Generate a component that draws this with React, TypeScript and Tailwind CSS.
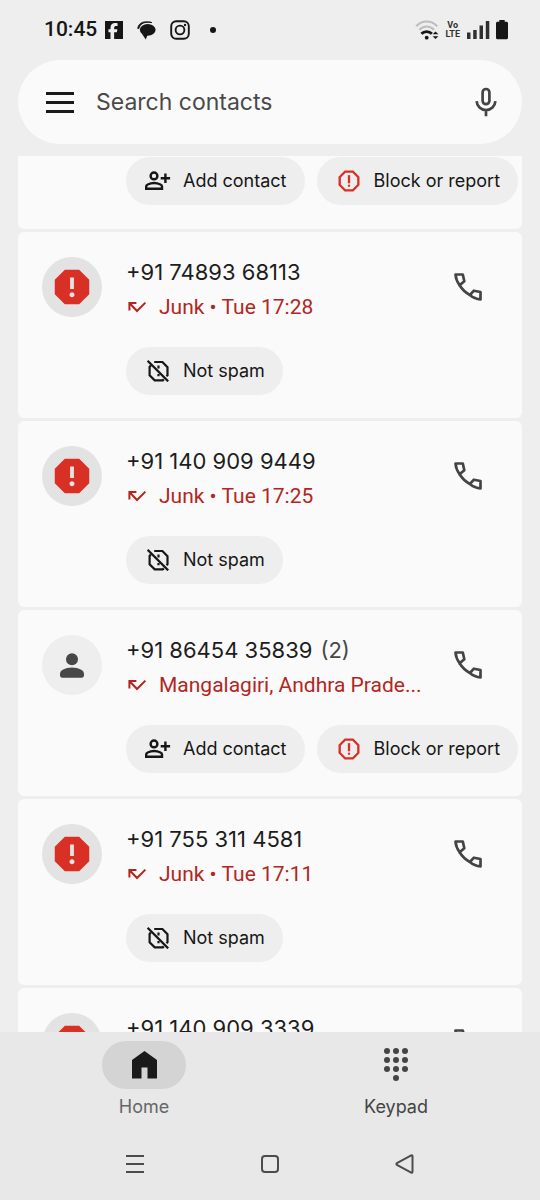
import React from "react";
import { FaFacebookF } from "react-icons/fa6";
import { MdOutlineReport, MdReport } from "react-icons/md";

type Call = {
  id: number;
  number?: string;
  count?: number;
  detail?: string;
  spam: boolean;
};

const calls: Call[] = [
  { id: 1, spam: false },
  { id: 2, number: "+91 74893 68113", detail: "Junk • Tue 17:28", spam: true },
  { id: 3, number: "+91 140 909 9449", detail: "Junk • Tue 17:25", spam: true },
  {
    id: 4,
    number: "+91 86454 35839",
    count: 2,
    detail: "Mangalagiri, Andhra Prade...",
    spam: false,
  },
  { id: 5, number: "+91 755 311 4581", detail: "Junk • Tue 17:11", spam: true },
  { id: 6, number: "+91 140 909 3339", spam: true },
];

/* ---------- icons ---------- */

const PersonAddIcon = () => (
  <svg width="26" height="20" viewBox="0 0 26 20" fill="none" stroke="currentColor" strokeWidth="2.4">
    <circle cx="9" cy="4.9" r="3.4" />
    <path d="M1.2 17.8v-2.2c0-1 .6-1.7 1.5-2.1 4.2-2 8.6-2 12.8 0 .9.4 1.500 1.100 1.500 2.100v2.200z" />
    <path d="M20.400 2.600v9.400M15.700 7.300h9.400" />
  </svg>
);

const NotSpamIcon = () => (
  <svg width="22" height="22" viewBox="0 0 22 22" fill="none" stroke="currentColor" strokeWidth="2.200">
    <path d="M7.200 2h8.200l5.100 5.100v8.200l-1 1M3.800 5.600 2.600 6.900v8.400l5.100 5.100h8.100l1-1" />
    <path d="M.6.8l20.600 20.600" />
    <path d="M11.500 5.500v3M11.500 14v2.300" />
  </svg>
);

const CallIcon = () => (
  <svg width="28" height="28" viewBox="0 0 28 28" fill="none" stroke="currentColor" strokeWidth="2.700" strokeLinejoin="round">
    <path d="M1.500 1.500h7.300l1.500 6.800-4.700 4C3.200 9 1.800 5.600 1.500 1.500z" />
    <path d="M5.600 12.300c2.600 4.200 6 7.400 10.300 9.700l4-4.300 6.600 1.300v7.400c-3.900-.3-7.500-1.800-10.600-4.400" />
  </svg>
);

const MicIcon = () => (
  <svg width="22" height="30" viewBox="0 0 22 30" fill="none" stroke="currentColor" strokeWidth="2.700">
    <rect x="7.600" y="2" width="6.800" height="15.200" rx="3.400" />
    <path d="M1.600 14.200c.4 5.100 4.200 8.900 9.400 8.900s9-3.800 9.400-8.900M11 23v6.200" />
  </svg>
);

const MissedIcon = () => (
  <svg width="21" height="13" viewBox="-1 0 21 13" fill="none" stroke="currentColor" strokeWidth="2">
    <path d="M2.400 9.500V2h7M2.400 2l7.600 8 8.400-8.400" />
  </svg>
);

const PersonIcon = () => (
  <svg width="24" height="25" viewBox="0 0 24 25" fill="currentColor">
    <circle cx="12" cy="6.200" r="6" />
    <path d="M0 21.200c0-2 1-3.600 2.800-4.500 5.800-3 12.600-3 18.400 0 1.800.9 2.800 2.500 2.800 4.500v1.300c0 1.200-1 2.200-2.200 2.200H2.200C1 24.700 0 23.700 0 22.500z" />
  </svg>
);

const MessagesIcon = () => (
  <svg width="19" height="20" viewBox="0 0 19 20" fill="#161616">
    <ellipse cx="10.700" cy="9.800" rx="7.900" ry="5.900" />
    <path d="M5 14l3.800 5.400L10.500 15z" />
    <path d="M.8 8.500C1.300 4.300 4.500 1.900 8.200 1.900h3.300c1.200 0 2.300.2 3.300.7-1.500-.2-3-.3-4.300-.3-4.300 0-7.500 2-8.700 6.200z" stroke="#161616" />
  </svg>
);

const InstagramIcon = () => (
  <svg width="20" height="20" viewBox="0 0 20 20" fill="none" stroke="#161616" strokeWidth="1.900">
    <rect x="1.200" y="1.200" width="17.600" height="17.600" rx="5" />
    <circle cx="10" cy="10" r="4.400" />
    <circle cx="15" cy="5" r="1.200" fill="#161616" stroke="none" />
  </svg>
);

const WifiIcon = () => (
  <svg width="24" height="20" viewBox="0 0 24 20" fill="none" strokeWidth="2.200">
    <path d="M1.200 6.300C7-.1 16.400-.1 22.200 6.300M4.400 9.800c4.200-4.400 10.400-4.400 14.600 0" stroke="#bdbdbd" />
    <path d="M6.400 13.800c2.900-3 7.600-3 10.500 0" stroke="#161616" strokeWidth="2.800" />
    <circle cx="11.700" cy="17.700" r="1.900" fill="#161616" />
    <path d="M17.600 14.300 20.500 11.600l2.900 2.700zM17.600 16.200h5.800l-2.900 2.700z" fill="#161616" />
  </svg>
);

const SignalIcon = () => (
  <svg width="24" height="20" viewBox="0 0 24 20" fill="#303030">
    <path d="M1 12.500h3.500V19H1zM7.200 10h3.500v9H7.200zM13.500 5.500H17V19h-3.500zM19.800 1h3.500v18h-3.500z" />
  </svg>
);

const BatteryIcon = () => (
  <svg width="12" height="20" viewBox="0 0 12 20" fill="#161616">
    <path d="M3.300 0h5.400v1.800h1.800c.8 0 1.500.7 1.500 1.500v14.400c0 .8-.7 1.500-1.500 1.500h-9C.7 19.200 0 18.500 0 17.700V3.300c0-.8.700-1.500 1.500-1.500h1.800z" />
  </svg>
);

const HomeIcon = () => (
  <svg width="25" height="28" viewBox="0 0 25 28" fill="#1a1a1a">
    <path d="M0 9 12.500 0 25 9v18.500h-9.500v-11h-6v11H0z" />
  </svg>
);

const KeypadIcon = () => (
  <svg width="26" height="34" viewBox="0 0 26 34" fill="#444444">
    {[3, 12, 21].map((y) => [4, 13, 22].map((x) => <circle key={`${x}-${y}`} cx={x} cy={y} r="3" />))}
    <circle cx="13" cy="30" r="3" />
  </svg>
);

/* ---------- parts ---------- */

const Chip: React.FC<{ icon: React.ReactNode; label: string }> = ({ icon, label }) => (
  <button className="flex h-12 shrink-0 items-center gap-[11px] rounded-full bg-[#eeeeee] px-[18px] text-lg text-[#161616]">
    <span className="flex w-7 justify-center">{icon}</span>
    {label}
  </button>
);

const CallActions: React.FC<{ spam: boolean }> = ({ spam }) => (
  <div className="flex gap-3 pl-[108px]">
    {spam ? (
      <Chip icon={<NotSpamIcon />} label="Not spam" />
    ) : (
      <>
        <Chip icon={<PersonAddIcon />} label="Add contact" />
        <Chip icon={<MdOutlineReport size={28} className="text-[#d93025]" />} label="Block or report" />
      </>
    )}
  </div>
);

const CallCard: React.FC<{ call: Call }> = ({ call }) => {
  // Only the actions are left of a card that is scrolled under the search bar
  if (!call.number) {
    return (
      <li className="shrink-0 rounded-b-md bg-[#fafafa] pt-px pb-6">
        <CallActions spam={call.spam} />
      </li>
    );
  }

  return (
    <li className="shrink-0 rounded-md bg-[#fafafa] pt-[25px] pb-[23px]">
      <div className="flex gap-6 px-6">
        {call.spam ? (
          <span className="flex size-[60px] shrink-0 items-center justify-center rounded-full bg-[#e3e3e3] text-[#d93025]">
            <MdReport size={46} />
          </span>
        ) : (
          <span className="flex size-[60px] shrink-0 items-center justify-center rounded-full bg-[#eeeeee] text-[#474747]">
            <PersonIcon />
          </span>
        )}
        <div className="min-w-0 grow">
          <h2 className="text-[22px] leading-[30px] text-[#1d1d1d]">
            {call.number}
            {call.count && <span className="ml-2 text-[#474747]">({call.count})</span>}
          </h2>
          {call.detail && (
            <p className="mt-[5px] flex items-center gap-3 font-[Roboto,sans-serif] text-[21px] leading-[30px] whitespace-nowrap text-[#b3261e]">
              <MissedIcon />
              {call.detail}
            </p>
          )}
        </div>
        <button aria-label="Call" className="-ml-6 flex size-[60px] shrink-0 items-center justify-center text-[#444444]">
          <CallIcon />
        </button>
      </div>
      {call.detail && (
        <div className="mt-[25px]">
          <CallActions spam={call.spam} />
        </div>
      )}
    </li>
  );
};

const StatusBar = () => (
  <div className="flex h-[60px] shrink-0 items-center justify-between pr-8 pl-11">
    <div className="flex items-center">
      <span className="font-[Roboto,sans-serif] text-[21px] font-medium text-[#161616]">10:45</span>
      <span className="ml-2 flex size-[18px] items-end justify-end bg-[#161616] pr-0.5 text-[#eeeeee]">
        <FaFacebookF size={16} />
      </span>
      <span className="ml-3.5">
        <MessagesIcon />
      </span>
      <span className="ml-3.5">
        <InstagramIcon />
      </span>
      <span className="ml-5 size-1.5 rounded-full bg-[#161616]" />
    </div>
    <div className="flex items-center gap-1.5">
      <WifiIcon />
      <span className="text-center font-['Liberation_Sans_Narrow','Roboto',sans-serif] text-[9px] leading-[9px] font-bold text-[#303030]">
        Vo
        <br />
        LTE
      </span>
      <SignalIcon />
      <BatteryIcon />
    </div>
  </div>
);

const SearchBar = () => (
  <form className="mx-[18px] flex h-[84px] shrink-0 items-center rounded-full bg-[#fafafa] pr-[25px] pl-7">
    <button type="button" aria-label="Menu" className="flex w-7 flex-col gap-1.5">
      <span className="h-[3px] bg-[#1a1a1a]" />
      <span className="h-[3px] bg-[#1a1a1a]" />
      <span className="h-[3px] bg-[#1a1a1a]" />
    </button>
    <input
      type="text"
      aria-label="Search contacts"
      placeholder="Search contacts"
      className="ml-[22px] min-w-0 grow bg-transparent text-[23px] text-[#1d1d1d] outline-none placeholder:text-[#4a4a4a]"
    />
    <button type="button" aria-label="Voice search" className="text-[#444444]">
      <MicIcon />
    </button>
  </form>
);

const BottomNav = () => (
  <nav className="grid grid-cols-2 px-[18px] pt-[9px] text-lg">
    <a href="#home" className="flex flex-col items-center gap-1 text-[#666666]">
      <span className="flex h-12 w-[84px] items-center justify-center rounded-full bg-[#d4d4d4]">
        <HomeIcon />
      </span>
      Home
    </a>
    <a href="#keypad" className="flex flex-col items-center gap-1 text-[#444444]">
      <span className="flex h-12 w-[84px] items-center justify-center">
        <KeypadIcon />
      </span>
      Keypad
    </a>
  </nav>
);

const SystemNav = () => (
  <div className="mt-6 grid h-[38px] grid-cols-3 items-center justify-items-center px-[12.5%] text-[#4c4c4c]">
    <button aria-label="Recent apps" className="flex w-[18px] flex-col gap-1.5">
      <span className="h-0.5 bg-current" />
      <span className="h-0.5 bg-current" />
      <span className="h-0.5 bg-current" />
    </button>
    <button aria-label="Home screen" className="size-[18px] rounded-sm border-2 border-current" />
    <button aria-label="Back">
      <svg width="20" height="20" viewBox="0 0 20 20" fill="none" stroke="currentColor" strokeWidth="2">
        <path d="M16.200 1.300 1.900 9c-.7.400-.7 1.400 0 1.800l14.300 7.800c.7.300 1.300 0 1.300-.8V2.100c0-.8-.6-1.100-1.300-.8z" />
      </svg>
    </button>
  </div>
);

const App: React.FC = () => {
  return (
    <div className="flex h-screen flex-col bg-[#eeeeee] font-[Inter,sans-serif]">
      <StatusBar />
      <SearchBar />

      {/* Call history */}
      <ul className="mx-[18px] mt-3 flex min-h-0 grow flex-col gap-[3px] overflow-hidden">
        {calls.map((call) => (
          <CallCard key={call.id} call={call} />
        ))}
      </ul>

      <footer className="shrink-0 bg-[#e8e8e8] pb-[17px]">
        <BottomNav />
        <SystemNav />
      </footer>
    </div>
  );
};

export default App;
